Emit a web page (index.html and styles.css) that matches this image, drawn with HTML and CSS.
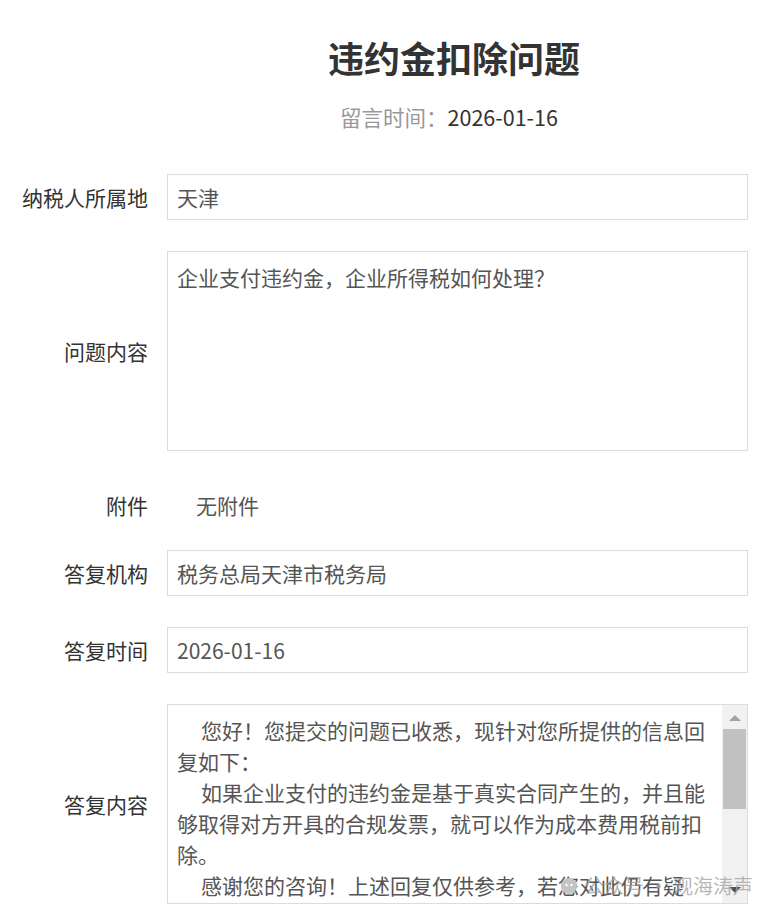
FILE: index.html
```html
<!DOCTYPE html>
<html lang="zh-CN">

<head>
    <meta charset="UTF-8">
    <meta name="viewport" content="width=device-width, initial-scale=1.0">
    <title>违约金扣除问题</title>
    <link rel="stylesheet" href="styles.css">
</head>

<body>
    <div class="wrap">
        <div class="head">
            <h1 class="title">违约金扣除问题</h1>
            <p class="time"><span class="time_label">留言时间：</span>2026-01-16</p>
        </div>

        <div class="row">
            <div class="label">纳税人所属地</div>
            <div class="box">天津</div>
        </div>
        <div class="row">
            <div class="label">问题内容</div>
            <div class="box area">企业支付违约金，企业所得税如何处理？</div>
        </div>
        <div class="row attach">
            <div class="label">附件</div>
            <div class="plain">无附件</div>
        </div>
        <div class="row">
            <div class="label">答复机构</div>
            <div class="box">税务总局天津市税务局</div>
        </div>
        <div class="row">
            <div class="label">答复时间</div>
            <div class="box">2026-01-16</div>
        </div>
        <div class="row reply">
            <div class="label">答复内容</div>
            <div class="box area scroll">
                <div class="scroll_text">
                    <p>您好！您提交的问题已收悉，现针对您所提供的信息回复如下：</p>
                    <p>如果企业支付的违约金是基于真实合同产生的，并且能够取得对方开具的合规发票，就可以作为成本费用税前扣除。</p>
                    <p>感谢您的咨询！上述回复仅供参考，若您对此仍有疑问，请联系主管税务机关进一步咨询。</p>
                </div>
                <div class="bar">
                    <span class="arrow up"></span>
                    <span class="thumb"></span>
                    <span class="arrow down"></span>
                </div>
            </div>
            <!-- 公众号水印 -->
            <div class="mark">
                <svg width="18" height="18" viewBox="0 0 18 18">
                    <circle cx="9" cy="9" r="8" fill="#c4c4c4" />
                    <circle cx="6.5" cy="8" r="1.2" fill="#fff" />
                    <circle cx="11.5" cy="8" r="1.2" fill="#fff" />
                </svg>
                <span>公众号 · 观海涛声</span>
            </div>
        </div>
    </div>
</body>

</html>
```

FILE: styles.css
```css
* {
    margin: 0;
    padding: 0;
    box-sizing: border-box;
}

body {
    background: #fff;
    font-family: "Noto Sans CJK SC", "Noto Sans", sans-serif;
    color: #333;
}

.wrap {
    width: 778px;
    padding: 32px 30px 0 0;
}

.head {
    padding-left: 167px;
    padding-right: 7px;
    text-align: center;
    margin-bottom: 42px;
}

.title {
    font-size: 36px;
    line-height: 50px;
    font-weight: bold;
    color: #333;
}

.time {
    margin-top: 20px;
    padding-right: 10px;
    font-size: 21.5px;
    line-height: 30px;
    color: #333;
}

.time_label {
    color: #999;
}

.row {
    display: grid;
    grid-template-columns: 148px 1fr;
    column-gap: 19px;
    align-items: center;
    margin-bottom: 31px;
    position: relative;
}

.label {
    text-align: right;
    font-size: 21px;
    color: #333;
}

.box {
    border: 1px solid #dcdcdc;
    height: 46px;
    padding: 0 9px;
    font-size: 21px;
    line-height: 44px;
    color: #555;
}

.box.area {
    height: 200px;
    padding: 10px 9px;
    line-height: 31px;
}

.attach {
    height: 46px;
    margin-bottom: 22px;
}

.plain {
    padding-left: 29px;
    font-size: 21px;
    color: #555;
}

.box.scroll {
    display: flex;
    padding: 0;
    overflow: hidden;
}

.scroll_text {
    flex: 1;
    padding: 10px 14px 0 9px;
    overflow: hidden;
}

.scroll_text p {
    text-indent: 24px;
}

.bar {
    width: 25px;
    background: #f1f1f1;
    display: flex;
    flex-direction: column;
    align-items: center;
    padding: 0 1px;
}

.arrow {
    width: 0;
    height: 0;
    border-left: 6px solid transparent;
    border-right: 6px solid transparent;
}

.arrow.up {
    margin: 10px 0 8px;
    border-bottom: 6px solid #a3a3a3;
}

.arrow.down {
    margin-top: auto;
    margin-bottom: 10px;
    border-top: 6px solid #505050;
}

.thumb {
    width: 100%;
    height: 80px;
    background: #c1c1c1;
}

.mark {
    position: absolute;
    right: -5px;
    bottom: 4px;
    display: flex;
    align-items: center;
    gap: 6px;
    font-size: 20px;
    color: rgba(160, 160, 160, 0.75);
}
```
